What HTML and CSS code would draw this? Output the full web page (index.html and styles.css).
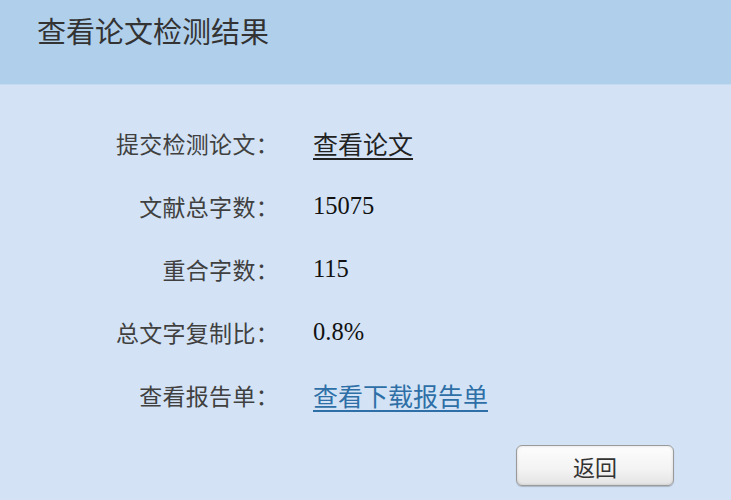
FILE: index.html
```html
<!DOCTYPE html>
<html lang="zh-CN">
<head>
<meta charset="utf-8">
<title>查看论文检测结果</title>
<link rel="stylesheet" href="styles.css">
</head>
<body>
<div class="page">
  <header class="header">
    <h1 class="title">查看论文检测结果</h1>
  </header>
  <main class="content">
    <dl class="info">
      <dt class="label">提交检测论文：</dt>
      <dd class="value"><a class="link-dark" href="#">查看论文</a></dd>
      <dt class="label">文献总字数：</dt>
      <dd class="value num">15075</dd>
      <dt class="label">重合字数：</dt>
      <dd class="value num">115</dd>
      <dt class="label">总文字复制比：</dt>
      <dd class="value num">0.8%</dd>
      <dt class="label">查看报告单：</dt>
      <dd class="value"><a class="link-blue" href="#">查看下载报告单</a></dd>
    </dl>
    <div class="actions">
      <button class="btn" type="button">返回</button>
    </div>
  </main>
</div>
</body>
</html>
```

FILE: styles.css
```css
html, body {
  margin: 0;
  padding: 0;
}
body {
  width: 731px;
  height: 500px;
  overflow: hidden;
  background: #d3e3f5;
  font-family: "Noto Sans CJK SC", "Liberation Serif", serif;
  color: #333;
}
.page {
  display: flex;
  flex-direction: column;
  height: 500px;
}
.header {
  height: 85px;
  background: #b0cfeb;
  display: flex;
  align-items: flex-start;
  padding: 0 0 0 37px;
  border-bottom: 1px solid #c4daf0;
  box-sizing: border-box;
}
.title {
  margin: 10px 0 0 0;
  font-size: 29px;
  font-weight: normal;
  line-height: 40px;
  color: #333;
}
.content {
  flex: 1;
  background: #d3e3f5;
  padding-top: 26px;
}
.info {
  display: grid;
  grid-template-columns: 279px auto;
  grid-auto-rows: 63px;
  column-gap: 34px;
  margin: 0;
  align-items: center;
}
.label {
  text-align: right;
  font-size: 23px;
  line-height: 32px;
  letter-spacing: 0.3px;
  color: #404040;
  margin: 0;
}
.value {
  margin: 0;
  font-size: 25px;
  line-height: 32px;
  color: #111;
}
.num {
  font-family: "Liberation Serif", "Noto Sans CJK SC", serif;
  font-size: 24.5px;
}
.link-dark {
  color: #222;
  text-decoration: underline;
  text-underline-offset: 4px;
  text-decoration-thickness: 2px;
}
.link-blue {
  color: #2d6fa6;
  text-decoration: underline;
  text-underline-offset: 4px;
  text-decoration-thickness: 2px;
}
.actions {
  display: flex;
  justify-content: flex-end;
  padding: 19px 57px 0 0;
}
.btn {
  width: 158px;
  height: 41px;
  border: 1px solid #9a9a9a;
  border-radius: 6px;
  background: linear-gradient(#fdfdfd, #f3f3f3 60%, #e4e4e4);
  box-shadow: inset 0 0 3px rgba(0,0,0,0.15), 0 1px 1px rgba(0,0,0,0.2);
  font-family: "Noto Sans CJK SC", sans-serif;
  font-size: 22px;
  color: #333;
  padding: 0;
}
```
